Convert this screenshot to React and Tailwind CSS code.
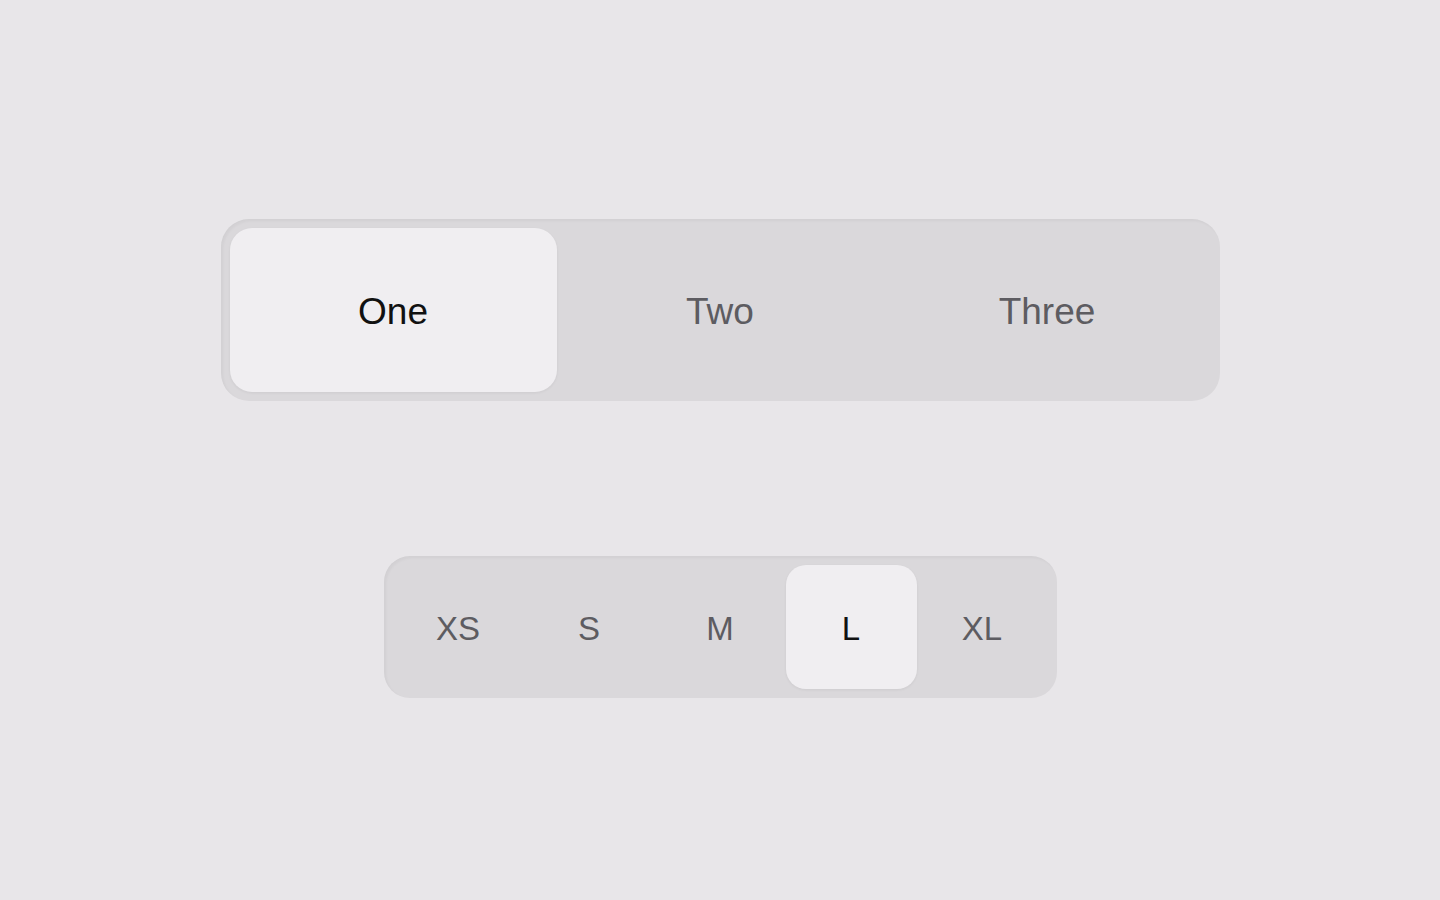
import React from "react";

const Segmented = ({ items, active, segW, segH, textSize, outerRadius, innerRadius }) => {
  return (
    <div
      className={`flex p-[9px] bg-[#dad8db] shadow-[inset_2px_2px_3px_rgba(0,0,0,0.04)] ${outerRadius}`}
    >
      {items.map((item) => (
        <div
          key={item}
          className={`flex items-center justify-center pt-[4px] ${segW} ${segH} ${textSize} ${innerRadius} ${
            item === active
              ? "bg-[#f0eef1] text-[#111111] shadow-[0_1px_3px_rgba(0,0,0,0.06)]"
              : "text-[#5d5c61]"
          }`}
        >
          {item}
        </div>
      ))}
    </div>
  );
};

export default function App() {
  return (
    <div
      className="w-full h-[900px] bg-[#e8e6e9] flex flex-col items-center pt-[219px] gap-[155px]"
      style={{ fontFamily: '"Liberation Sans", Arial, sans-serif' }}
    >
      {/* big three-way control */}
      <Segmented
        items={["One", "Two", "Three"]}
        active="One"
        segW="w-[327px]"
        segH="h-[164px]"
        textSize="text-[37px]"
        outerRadius="rounded-[28px]"
        innerRadius="rounded-[22px]"
      />

      {/* sizes */}
      <Segmented
        items={["XS", "S", "M", "L", "XL"]}
        active="L"
        segW="w-[131px]"
        segH="h-[124px]"
        textSize="text-[33px]"
        outerRadius="rounded-[26px]"
        innerRadius="rounded-[20px]"
      />
    </div>
  );
}
